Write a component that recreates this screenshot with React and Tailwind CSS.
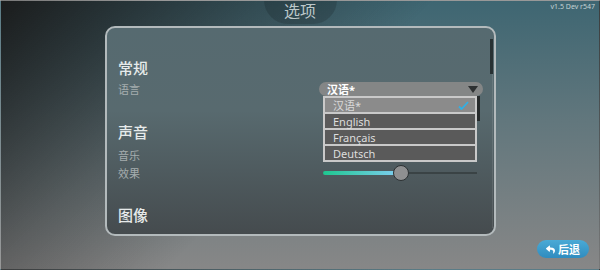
import { FaReply } from "react-icons/fa";

const cjk = "font-['Noto_Sans','Noto_Sans_CJK_SC',sans-serif]";

function Dropdown() {
  const items = ["English", "Français", "Deutsch"];
  return (
    <div className="relative w-[164px] h-[14px]">
      <div className="h-[14px] rounded-full bg-[#848686] flex items-center pl-[8px] pr-[5px]">
        <span className="text-[11px] leading-none font-bold text-white">汉语*</span>
        <svg className="ml-auto" width="10" height="7" viewBox="0 0 10 7">
          <polygon points="0,0 10,0 5,7" fill="#2e3132" />
        </svg>
      </div>

      {/* open list */}
      <div className="absolute left-[4px] top-[14px] w-[154px] z-10">
        <div className="bg-[#c9c9c9] p-[2px] flex flex-col gap-[2px]">
          <div className="h-[14px] bg-[#8b8b8b] flex items-center pl-[8px] pr-[6px]">
            <span className="text-[11px] leading-none text-[#d8d8d8]">汉语*</span>
            <svg className="ml-auto" width="11" height="9" viewBox="0 0 11 9">
              <path d="M1 5.5 L3.5 8 L10 1" stroke="#2fb0e6" strokeWidth="1.8" fill="none" />
            </svg>
          </div>
          {items.map((it) => (
            <div key={it} className="h-[14px] bg-[#5a5a5a] flex items-center pl-[8px]">
              <span className="text-[11px] leading-none text-[#dddddd]">{it}</span>
            </div>
          ))}
        </div>
        <div className="absolute -right-[3px] top-0 w-[3px] h-[25px] bg-[#262a2b]" />
      </div>
    </div>
  );
}

function Slider() {
  return (
    <div className="relative w-[164px] h-[16px] flex items-center">
      <div className="ml-[4px] w-[154px] h-[2px] bg-[#3a4345] relative">
        <div className="absolute left-0 -top-[1px] h-[4px] w-[72px] rounded-full bg-[linear-gradient(90deg,#1ec78f,#7acdec)]" />
      </div>
      <div className="absolute left-[74px] top-0 w-[16px] h-[16px] rounded-full bg-[#8f9091] border border-[#2c3133]" />
    </div>
  );
}

export default function App() {
  return (
    <div
      className={`relative w-[600px] h-[270px] overflow-hidden border border-white/15 ${cjk} bg-[linear-gradient(135deg,rgba(26,26,26,0.97)_0%,rgba(26,26,26,0.35)_30%,rgba(26,26,26,0)_50%),linear-gradient(180deg,#3e6672_0%,#62777d_45%,#878787_100%)]`}
    >
      <div className="absolute top-[2px] right-[4px] text-[7px] leading-none text-[#c3d2d4]">v1.5 Dev r547</div>

      <div className="flex justify-center">
        <div className="w-[73px] h-[24px] -mt-px rounded-b-[36px] bg-black/15 flex items-start justify-center pt-[1px]">
          <span className="text-[16px] leading-[20px] text-[#bcc7c9]">选项</span>
        </div>
      </div>

      <div className="ml-[104px] mt-[2px] w-[391px] h-[210px] rounded-[10px] border-2 border-[#b3babc] bg-[linear-gradient(180deg,#566a70_0%,#586a6f_40%,#454b4e_100%)] relative">
        <div className="absolute right-[1px] top-[11px] bottom-[6px] w-px bg-white/10" />
        <div className="absolute right-[1px] top-[11px] w-[3px] h-[35px] bg-[#283133]" />

        <div className="pl-[11px] pt-[30px]">
          <div className="text-[15px] leading-[20px] text-[#e6eaea] font-medium">常规</div>

          <div className="mt-[4px] flex items-center h-[14px]">
            <div className="w-[201px] text-[11px] leading-none text-[#a5adae]">语言</div>
            <Dropdown />
          </div>

          <div className="mt-[26px] text-[15px] leading-[20px] text-[#e6eaea] font-medium">声音</div>

          <div className="mt-[6px] flex items-center h-[14px]">
            <div className="w-[201px] text-[11px] leading-none text-[#a5adae]">音乐</div>
          </div>

          <div className="mt-[3px] flex items-center h-[16px]">
            <div className="w-[201px] text-[11px] leading-none text-[#a5adae]">效果</div>
            <Slider />
          </div>

          <div className="mt-[24px] text-[15px] leading-[20px] text-[#e6eaea] font-medium">图像</div>
        </div>
      </div>

      <div className="flex justify-end pr-[10px] mt-[4px]">
        <div className="w-[52px] h-[18px] rounded-full bg-[linear-gradient(180deg,#4aaad6,#2f8cbf)] flex items-center justify-center gap-[3px]">
          <FaReply className="text-white w-[9px] h-[9px]" />
          <span className="text-[11px] leading-none font-bold text-white">后退</span>
        </div>
      </div>
    </div>
  );
}
